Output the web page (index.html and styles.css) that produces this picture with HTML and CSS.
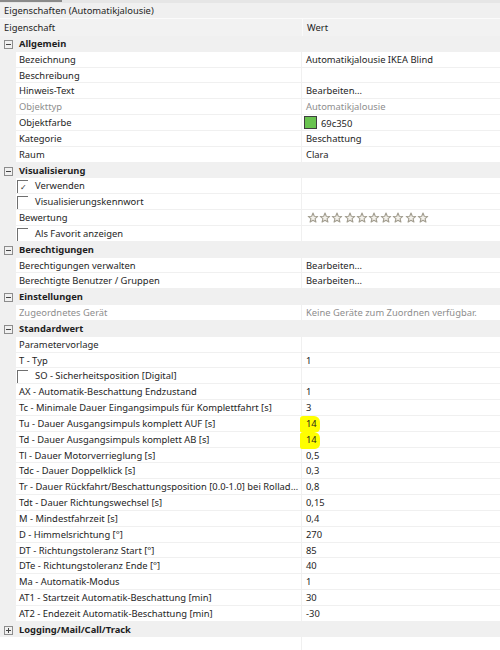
FILE: index.html
```html
<!DOCTYPE html>
<html lang="de">
<head>
    <meta charset="UTF-8">
    <title>Eigenschaften</title>
    <link rel="stylesheet" href="styles.css">
</head>
<body>
    <svg width="0" height="0" class="defs">
        <symbol id="star" viewBox="0 0 12 12">
            <polygon points="6,1 7.29,4.22 10.76,4.45 8.09,6.68 8.94,10.05 6,8.2 3.06,10.05 3.91,6.68 1.24,4.45 4.71,4.22" fill="#f4f2ec" stroke="#a29d8f" stroke-width="1.1" stroke-linejoin="round"/>
        </symbol>
    </svg>

    <div class="panel">
        <div class="topbar"><span class="tab-mark"></span></div>
        <div class="title">Eigenschaften (Automatikjalousie)</div>
        <div class="head">
            <div class="head-name">Eigenschaft</div>
            <div class="head-val">Wert</div>
        </div>

        <div class="grid">
            <div class="row sec"><span class="tog"></span><span class="sec-name">Allgemein</span></div>
            <div class="row"><span class="gut"></span><span class="name">Bezeichnung</span><span class="val">Automatikjalousie IKEA Blind</span></div>
            <div class="row"><span class="gut"></span><span class="name">Beschreibung</span><span class="val"></span></div>
            <div class="row"><span class="gut"></span><span class="name">Hinweis-Text</span><span class="val">Bearbeiten...</span></div>
            <div class="row off"><span class="gut"></span><span class="name">Objekttyp</span><span class="val">Automatikjalousie</span></div>
            <div class="row"><span class="gut"></span><span class="name">Objektfarbe</span><span class="val"><span class="swatch"></span>69c350</span></div>
            <div class="row"><span class="gut"></span><span class="name">Kategorie</span><span class="val">Beschattung</span></div>
            <div class="row"><span class="gut"></span><span class="name">Raum</span><span class="val">Clara</span></div>

            <div class="row sec"><span class="tog"></span><span class="sec-name">Visualisierung</span></div>
            <div class="row"><span class="gut"></span><span class="name chk"><span class="box">&#10003;</span>Verwenden</span><span class="val"></span></div>
            <div class="row"><span class="gut"></span><span class="name chk"><span class="box"></span>Visualisierungskennwort</span><span class="val"></span></div>
            <div class="row"><span class="gut"></span><span class="name">Bewertung</span>
                <span class="val stars">
                    <svg><use href="#star"/></svg><svg><use href="#star"/></svg><svg><use href="#star"/></svg><svg><use href="#star"/></svg><svg><use href="#star"/></svg><svg><use href="#star"/></svg><svg><use href="#star"/></svg><svg><use href="#star"/></svg><svg><use href="#star"/></svg><svg><use href="#star"/></svg>
                </span>
            </div>
            <div class="row"><span class="gut"></span><span class="name chk"><span class="box"></span>Als Favorit anzeigen</span><span class="val"></span></div>

            <div class="row sec"><span class="tog"></span><span class="sec-name">Berechtigungen</span></div>
            <div class="row"><span class="gut"></span><span class="name">Berechtigungen verwalten</span><span class="val">Bearbeiten...</span></div>
            <div class="row"><span class="gut"></span><span class="name">Berechtigte Benutzer / Gruppen</span><span class="val">Bearbeiten...</span></div>

            <div class="row sec"><span class="tog"></span><span class="sec-name">Einstellungen</span></div>
            <div class="row off"><span class="gut"></span><span class="name">Zugeordnetes Gerät</span><span class="val">Keine Geräte zum Zuordnen verfügbar.</span></div>

            <div class="row sec"><span class="tog"></span><span class="sec-name">Standardwert</span></div>
            <div class="row"><span class="gut"></span><span class="name">Parametervorlage</span><span class="val"></span></div>
            <div class="row"><span class="gut"></span><span class="name">T - Typ</span><span class="val">1</span></div>
            <div class="row"><span class="gut"></span><span class="name chk"><span class="box"></span>SO - Sicherheitsposition [Digital]</span><span class="val"></span></div>
            <div class="row"><span class="gut"></span><span class="name">AX - Automatik-Beschattung Endzustand</span><span class="val">1</span></div>
            <div class="row"><span class="gut"></span><span class="name">Tc - Minimale Dauer Eingangsimpuls für Komplettfahrt [s]</span><span class="val">3</span></div>
            <div class="row hl-row"><span class="gut"></span><span class="name">Tu - Dauer Ausgangsimpuls komplett AUF [s]</span><span class="val"><span class="mark">14</span></span></div>
            <div class="row hl-row"><span class="gut"></span><span class="name">Td - Dauer Ausgangsimpuls komplett AB [s]</span><span class="val"><span class="mark">14</span></span></div>
            <div class="row"><span class="gut"></span><span class="name">Tl - Dauer Motorverrieglung [s]</span><span class="val">0,5</span></div>
            <div class="row"><span class="gut"></span><span class="name">Tdc - Dauer Doppelklick [s]</span><span class="val">0,3</span></div>
            <div class="row"><span class="gut"></span><span class="name">Tr - Dauer Rückfahrt/Beschattungsposition [0.0-1.0] bei Rolladen [s]</span><span class="val">0,8</span></div>
            <div class="row"><span class="gut"></span><span class="name">Tdt - Dauer Richtungswechsel [s]</span><span class="val">0,15</span></div>
            <div class="row"><span class="gut"></span><span class="name">M - Mindestfahrzeit [s]</span><span class="val">0,4</span></div>
            <div class="row"><span class="gut"></span><span class="name">D - Himmelsrichtung [°]</span><span class="val">270</span></div>
            <div class="row"><span class="gut"></span><span class="name">DT - Richtungstoleranz Start [°]</span><span class="val">85</span></div>
            <div class="row"><span class="gut"></span><span class="name">DTe - Richtungstoleranz Ende [°]</span><span class="val">40</span></div>
            <div class="row"><span class="gut"></span><span class="name">Ma - Automatik-Modus</span><span class="val">1</span></div>
            <div class="row"><span class="gut"></span><span class="name">AT1 - Startzeit Automatik-Beschattung [min]</span><span class="val">30</span></div>
            <div class="row"><span class="gut"></span><span class="name">AT2 - Endezeit Automatik-Beschattung [min]</span><span class="val">-30</span></div>

            <div class="row sec"><span class="tog closed"></span><span class="sec-name">Logging/Mail/Call/Track</span></div>
            <div class="row empty"><span class="gut"></span><span class="name"></span><span class="val"></span></div>
        </div>
    </div>
</body>
</html>
```

FILE: styles.css
```css
body {
    margin: 0;
    padding: 0;
    background: #fff;
    font-family: "Noto Sans", "Open Sans", sans-serif;
    font-size: 9.4px;
    color: #1e1e1e;
}

.defs {
    position: absolute;
}

.panel {
    width: 500px;
    height: 650px;
    overflow: hidden;
}

.topbar {
    height: 3px;
    background: #e6e6e6;
}

.tab-mark {
    display: block;
    width: 62px;
    height: 2px;
    background: #8a8a8a;
}

.title {
    height: 15px;
    line-height: 15px;
    padding-left: 4px;
    background: #f0f0f0;
    border-bottom: 1px solid #fbfbfb;
}

.head {
    display: flex;
    height: 17px;
    line-height: 17px;
    background: #f2f2f2;
}

.head-name {
    width: 298px;
    padding-left: 4px;
    border-right: 1px solid #fafafa;
}

.head-val {
    padding-left: 4px;
}

/* property rows */

.row {
    display: flex;
    height: 15.83px;
    line-height: 15px;
    box-sizing: border-box;
}

.gut {
    width: 16px;
    flex: none;
    background: #f0f0f0;
}

.name {
    width: 286px;
    flex: none;
    padding-left: 3px;
    box-sizing: border-box;
    background: #fff;
    border-bottom: 1px solid #f0f0f0;
    border-right: 1px solid #f0f0f0;
    white-space: nowrap;
    overflow: hidden;
    text-overflow: ellipsis;
}

.val {
    flex: 1;
    padding-left: 4px;
    background: #fff;
    border-bottom: 1px solid #f0f0f0;
    white-space: nowrap;
}

.off .name,
.off .val {
    color: #8e8e8e;
}

.sec {
    background: #f0f0f0;
}

/* expand / collapse box */
.tog {
    position: relative;
    width: 7px;
    height: 7px;
    margin: 4px 4px 0 4px;
    border: 1px solid #8c8c8c;
    flex: none;
}

.tog::before {
    content: "";
    position: absolute;
    left: 1px;
    top: 3px;
    width: 5px;
    height: 1px;
    background: #444;
}

.tog.closed::after {
    content: "";
    position: absolute;
    left: 3px;
    top: 1px;
    width: 1px;
    height: 5px;
    background: #444;
}

.sec-name {
    padding-left: 2px;
    font-weight: bold;
}

.swatch {
    display: inline-block;
    width: 11px;
    height: 11px;
    margin: 1px 4px 0 -2px;
    vertical-align: -2px;
    background: #69c350;
    border: 1px solid #3f3f3f;
}

/* checkbox rows */

.chk {
    display: flex;
    padding-left: 1px;
}

.box {
    width: 10px;
    height: 13px;
    margin: 2px 7px 0 0;
    border-top: 1px solid #6f6f6f;
    border-left: 1px solid #6f6f6f;
    font-size: 8px;
    line-height: 11px;
    text-align: center;
    color: #333;
    flex: none;
}

.stars {
    display: flex;
    align-items: center;
    padding-left: 5px;
}

.stars svg {
    width: 12px;
    height: 12px;
    margin-right: 0.2px;
}

.hl-row {
    position: relative;
    z-index: 1;
}

.mark {
    display: inline-block;
    margin-left: -6px;
    padding: 1px 3px 2px 6px;
    line-height: 14px;
    background: #ffff00;
    border-radius: 3px 6px 5px 2px;
}

.empty {
    height: 14px;
}

.empty .gut {
    background: #fff;
}

.empty .name,
.empty .val {
    border-bottom: none;
}
```
